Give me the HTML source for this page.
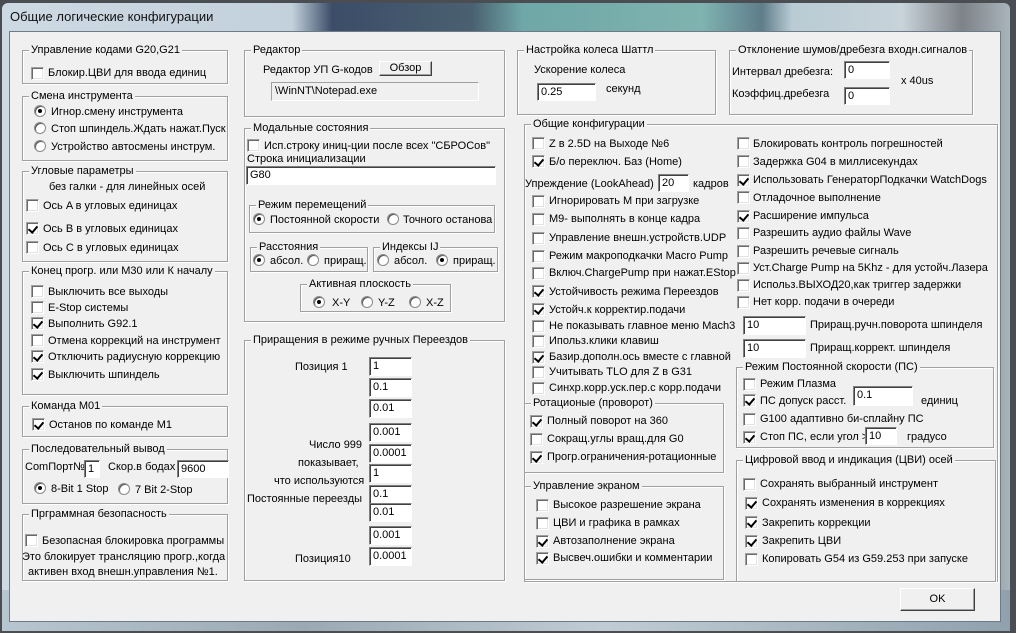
<!DOCTYPE html>
<html><head><meta charset="utf-8"><style>
*{margin:0;padding:0;box-sizing:border-box}
body{width:1016px;height:633px;overflow:hidden;background:#4a4e52;font-family:"Liberation Sans","DejaVu Sans",sans-serif;font-size:11px;color:#000;position:relative}
#frame{position:absolute;left:2px;top:3px;width:1008px;height:628px;border-radius:6px 6px 0 0;background:linear-gradient(90deg,#cdd9e3 0,#c3d1dc 290px,#3c4d68 330px,#4a6070 470px,#6ea7a6 520px,#7fb3b0 700px,#5f7d8a 760px,#b9cbd4 790px,#c8d3da 900px,#7d8388 960px,#a9b4bb 1008px)}
#frame2{position:absolute;left:2px;top:590px;width:1008px;height:41px;background:linear-gradient(90deg,#b7c6d1,#9aa9b4 30%,#c0ccd4 60%,#8fa1ad)}
#title{position:absolute;left:10px;top:9px;font-size:13px;color:#111}
#client{position:absolute;left:9px;top:31px;width:992px;height:591px;background:#f0f0f0;border:1px solid #6d7b88}
.a{position:absolute;white-space:nowrap;line-height:14px}
.g{position:absolute;border:1px solid #a0a0a0;box-shadow:1px 1px 0 #fff,inset 1px 1px 0 #fff}
.l{position:absolute;top:-8px;left:6px;background:#f0f0f0;padding:0 2px;line-height:14px;white-space:nowrap}
.c{position:absolute;width:13px;height:13px;background:#fff;border:1px solid;border-color:#a0a0a0 #fff #fff #a0a0a0;box-shadow:inset 1px 1px 0 #696969,inset -1px -1px 0 #e3e3e3}
.k::after{content:"";position:absolute;left:3px;top:1px;width:4px;height:7px;border:solid #000;border-width:0 2px 2px 0;transform:rotate(40deg)}
.r{position:absolute;width:12px;height:12px;border-radius:50%;background:#fff;border:1px solid #8a8a8a;box-shadow:inset 1px 1px 0 #555}
.s::after{content:"";position:absolute;left:3px;top:3px;width:4px;height:4px;border-radius:50%;background:#000}
.i{position:absolute;background:#fff;border:1px solid;border-color:#808080 #fff #fff #808080;box-shadow:inset 1px 1px 0 #404040;padding:1px 3px;line-height:14px;white-space:nowrap;overflow:hidden}
.b{position:absolute;background:#f0f0f0;border:1px solid;border-color:#fff #404040 #404040 #fff;box-shadow:inset -1px -1px 0 #a0a0a0;text-align:center;line-height:13px}
</style></head><body>
<div id="frame"></div><div id="frame2"></div>
<div id="title">Общие логические конфигурации</div>
<div id="client"></div>

<!-- Left column -->
<div class="g" style="left:22px;top:50px;width:206px;height:34px"><span class="l">Управление кодами G20,G21</span></div>
<div class="c" style="left:31px;top:67px"></div><div class="a" style="left:48px;top:66px">Блокир.ЦВИ для ввода единиц</div>

<div class="g" style="left:22px;top:96px;width:206px;height:65px"><span class="l">Смена инструмента</span></div>
<div class="r s" style="left:34px;top:105px"></div><div class="a" style="left:51px;top:105px">Игнор.смену инструмента</div>
<div class="r" style="left:34px;top:122px"></div><div class="a" style="left:51px;top:122px">Стоп шпиндель.Ждать нажат.Пуск</div>
<div class="r" style="left:34px;top:140px"></div><div class="a" style="left:51px;top:140px">Устройство автосмены инструм.</div>

<div class="g" style="left:22px;top:171px;width:206px;height:91px"><span class="l">Угловые параметры</span></div>
<div class="a" style="left:49px;top:180px">без галки - для линейных осей</div>
<div class="c" style="left:26px;top:199px"></div><div class="a" style="left:43px;top:199px">Ось A в угловых единицах</div>
<div class="c k" style="left:26px;top:222px"></div><div class="a" style="left:43px;top:222px">Ось B в угловых единицах</div>
<div class="c" style="left:26px;top:241px"></div><div class="a" style="left:43px;top:241px">Ось C в угловых единицах</div>

<div class="g" style="left:22px;top:271px;width:206px;height:124px"><span class="l">Конец прогр. или M30 или К началу</span></div>
<div class="c" style="left:31px;top:285px"></div><div class="a" style="left:48px;top:285px">Выключить все выходы</div>
<div class="c" style="left:31px;top:301px"></div><div class="a" style="left:48px;top:301px">E-Stop системы</div>
<div class="c k" style="left:31px;top:317px"></div><div class="a" style="left:48px;top:317px">Выполнить G92.1</div>
<div class="c" style="left:31px;top:334px"></div><div class="a" style="left:48px;top:334px">Отмена коррекций на инструмент</div>
<div class="c k" style="left:31px;top:350px"></div><div class="a" style="left:48px;top:350px">Отключить радиусную коррекцию</div>
<div class="c k" style="left:31px;top:368px"></div><div class="a" style="left:48px;top:368px">Выключить шпиндель</div>

<div class="g" style="left:22px;top:406px;width:206px;height:31px"><span class="l">Команда M01</span></div>
<div class="c k" style="left:32px;top:418px"></div><div class="a" style="left:49px;top:418px">Останов по команде M1</div>

<div class="g" style="left:22px;top:449px;width:206px;height:55px"><span class="l">Последовательный вывод</span></div>
<div class="a" style="left:25px;top:460px">ComПорт№</div>
<div class="i" style="left:84px;top:460px;width:16px;height:18px">1</div>
<div class="a" style="left:108px;top:460px">Скор.в бодах</div>
<div class="i" style="left:177px;top:460px;width:52px;height:18px">9600</div>
<div class="r s" style="left:34px;top:482px"></div><div class="a" style="left:51px;top:482px">8-Bit 1 Stop</div>
<div class="r" style="left:118px;top:483px"></div><div class="a" style="left:135px;top:483px">7 Bit 2-Stop</div>

<div class="g" style="left:22px;top:514px;width:206px;height:67px"><span class="l">Прграммная безопасность</span></div>
<div class="c" style="left:25px;top:534px"></div><div class="a" style="left:42px;top:534px">Безопасная блокировка программы</div>
<div class="a" style="left:22px;top:550px">Это блокирует трансляцию прогр.,когда</div>
<div class="a" style="left:28px;top:565px">активен вход внешн.управления №1.</div>

<!-- Middle column -->
<div class="g" style="left:244px;top:50px;width:261px;height:67px"><span class="l">Редактор</span></div>
<div class="a" style="left:263px;top:63px">Редактор УП G-кодов</div>
<div class="b" style="left:379px;top:61px;width:53px;height:15px">Обзор</div>
<div class="i" style="left:271px;top:82px;width:208px;height:19px;background:#f0f0f0;box-shadow:none;border-color:#a0a0a0 #fff #fff #a0a0a0">\WinNT\Notepad.exe</div>

<div class="g" style="left:244px;top:128px;width:261px;height:194px"><span class="l">Модальные состояния</span></div>
<div class="c" style="left:247px;top:139px"></div><div class="a" style="left:264px;top:139px">Исп.строку иниц-ции после всех "СБРОСов"</div>
<div class="a" style="left:247px;top:152px">Строка инициализации</div>
<div class="i" style="left:246px;top:166px;width:250px;height:19px">G80</div>
<div class="g" style="left:249px;top:205px;width:246px;height:28px"><span class="l">Режим перемещений</span></div>
<div class="r s" style="left:253px;top:213px"></div><div class="a" style="left:270px;top:213px">Постоянной скорости</div>
<div class="r" style="left:387px;top:213px"></div><div class="a" style="left:403px;top:213px">Точного останова</div>
<div class="g" style="left:250px;top:247px;width:118px;height:25px"><span class="l">Расстояния</span></div>
<div class="r s" style="left:253px;top:254px"></div><div class="a" style="left:270px;top:254px">абсол.</div>
<div class="r" style="left:307px;top:254px"></div><div class="a" style="left:324px;top:254px">приращ.</div>
<div class="g" style="left:373px;top:247px;width:125px;height:25px"><span class="l">Индексы IJ</span></div>
<div class="r" style="left:377px;top:254px"></div><div class="a" style="left:394px;top:254px">абсол.</div>
<div class="r s" style="left:436px;top:254px"></div><div class="a" style="left:453px;top:254px">приращ.</div>
<div class="g" style="left:300px;top:284px;width:151px;height:28px"><span class="l">Активная плоскость</span></div>
<div class="r s" style="left:313px;top:296px"></div><div class="a" style="left:332px;top:296px">X-Y</div>
<div class="r" style="left:361px;top:296px"></div><div class="a" style="left:378px;top:296px">Y-Z</div>
<div class="r" style="left:409px;top:296px"></div><div class="a" style="left:426px;top:296px">X-Z</div>

<div class="g" style="left:244px;top:340px;width:261px;height:241px"><span class="l">Приращения в режиме ручных Переездов</span></div>
<div class="a" style="left:295px;top:360px">Позиция 1</div>
<div class="a" style="left:309px;top:438px">Число 999</div>
<div class="a" style="left:298px;top:456px">показывает,</div>
<div class="a" style="left:274px;top:474px">что используются</div>
<div class="a" style="left:247px;top:492px">Постоянные переезды</div>
<div class="a" style="left:295px;top:552px">Позиция10</div>
<div class="i" style="left:369px;top:357px;width:43px;height:19px">1</div>
<div class="i" style="left:369px;top:378px;width:43px;height:19px">0.1</div>
<div class="i" style="left:369px;top:399px;width:43px;height:19px">0.01</div>
<div class="i" style="left:369px;top:423px;width:43px;height:19px">0.001</div>
<div class="i" style="left:369px;top:444px;width:43px;height:19px">0.0001</div>
<div class="i" style="left:369px;top:464px;width:43px;height:19px">1</div>
<div class="i" style="left:369px;top:485px;width:43px;height:19px">0.1</div>
<div class="i" style="left:369px;top:503px;width:43px;height:19px">0.01</div>
<div class="i" style="left:369px;top:526px;width:43px;height:19px">0.001</div>
<div class="i" style="left:369px;top:547px;width:43px;height:19px">0.0001</div>

<!-- Right part top -->
<div class="g" style="left:517px;top:50px;width:199px;height:65px"><span class="l">Настройка колеса Шаттл</span></div>
<div class="a" style="left:534px;top:63px">Ускорение колеса</div>
<div class="i" style="left:537px;top:83px;width:59px;height:18px">0.25</div>
<div class="a" style="left:606px;top:82px">секунд</div>
<div class="g" style="left:729px;top:50px;width:244px;height:65px"><span class="l">Отклонение шумов/дребезга входн.сигналов</span></div>
<div class="a" style="left:732px;top:65px">Интервал дребезга:</div>
<div class="i" style="left:844px;top:61px;width:46px;height:18px">0</div>
<div class="a" style="left:732px;top:87px">Коэффиц.дребезга</div>
<div class="i" style="left:844px;top:87px;width:46px;height:18px">0</div>
<div class="a" style="left:901px;top:74px">x 40us</div>

<!-- Общие конфигурации -->
<div class="g" style="left:524px;top:124px;width:474px;height:458px"><span class="l">Общие конфигурации</span></div>
<div class="c" style="left:532px;top:137px"></div><div class="a" style="left:549px;top:137px">Z в 2.5D на Выходе №6</div>
<div class="c k" style="left:532px;top:155px"></div><div class="a" style="left:549px;top:155px">Б/о переключ. Баз (Home)</div>
<div class="a" style="left:525px;top:177px">Упреждение (LookAhead)</div>
<div class="i" style="left:658px;top:174px;width:31px;height:18px">20</div>
<div class="a" style="left:693px;top:177px">кадров</div>
<div class="c" style="left:532px;top:195px"></div><div class="a" style="left:549px;top:194px">Игнорировать M при загрузке</div>
<div class="c" style="left:532px;top:213px"></div><div class="a" style="left:549px;top:212px">M9- выполнять в конце кадра</div>
<div class="c" style="left:532px;top:232px"></div><div class="a" style="left:549px;top:231px">Управление внешн.устройств.UDP</div>
<div class="c" style="left:532px;top:250px"></div><div class="a" style="left:549px;top:249px">Режим макроподкачки Macro Pump</div>
<div class="c" style="left:532px;top:267px"></div><div class="a" style="left:549px;top:266px">Включ.ChargePump при нажат.EStop</div>
<div class="c k" style="left:532px;top:285px"></div><div class="a" style="left:549px;top:285px">Устойчивость режима Переездов</div>
<div class="c k" style="left:532px;top:303px"></div><div class="a" style="left:549px;top:303px">Устойч.к корректир.подачи</div>
<div class="c" style="left:532px;top:320px"></div><div class="a" style="left:549px;top:319px">Не показывать главное меню Mach3</div>
<div class="c" style="left:532px;top:335px"></div><div class="a" style="left:549px;top:334px">Ипольз.клики клавиш</div>
<div class="c k" style="left:532px;top:351px"></div><div class="a" style="left:549px;top:350px">Базир.дополн.ось вместе с главной</div>
<div class="c" style="left:532px;top:366px"></div><div class="a" style="left:549px;top:365px">Учитывать TLO для Z в G31</div>
<div class="c" style="left:532px;top:382px"></div><div class="a" style="left:549px;top:381px">Синхр.корр.уск.пер.с корр.подачи</div>

<div class="g" style="left:524px;top:403px;width:200px;height:70px"><span class="l">Ротационые (проворот)</span></div>
<div class="c k" style="left:530px;top:415px"></div><div class="a" style="left:547px;top:414px">Полный поворот на 360</div>
<div class="c" style="left:530px;top:433px"></div><div class="a" style="left:547px;top:432px">Сокращ.углы вращ.для G0</div>
<div class="c k" style="left:530px;top:451px"></div><div class="a" style="left:547px;top:450px">Прогр.ограничения-ротационные</div>

<div class="g" style="left:524px;top:486px;width:200px;height:94px"><span class="l">Управление экраном</span></div>
<div class="c" style="left:536px;top:499px"></div><div class="a" style="left:553px;top:498px">Высокое разрешение экрана</div>
<div class="c" style="left:536px;top:517px"></div><div class="a" style="left:553px;top:516px">ЦВИ и графика в рамках</div>
<div class="c k" style="left:536px;top:535px"></div><div class="a" style="left:553px;top:534px">Автозаполнение экрана</div>
<div class="c k" style="left:536px;top:552px"></div><div class="a" style="left:553px;top:551px">Высвеч.ошибки и комментарии</div>

<div class="c" style="left:737px;top:137px"></div><div class="a" style="left:753px;top:137px">Блокировать контроль погрешностей</div>
<div class="c" style="left:737px;top:155px"></div><div class="a" style="left:753px;top:155px">Задержка G04 в миллисекундах</div>
<div class="c k" style="left:737px;top:174px"></div><div class="a" style="left:753px;top:173px">Использовать ГенераторПодкачки WatchDogs</div>
<div class="c" style="left:737px;top:191px"></div><div class="a" style="left:753px;top:191px">Отладочное выполнение</div>
<div class="c k" style="left:737px;top:210px"></div><div class="a" style="left:753px;top:209px">Расширение импульса</div>
<div class="c" style="left:737px;top:227px"></div><div class="a" style="left:753px;top:226px">Разрешить аудио файлы Wave</div>
<div class="c" style="left:737px;top:245px"></div><div class="a" style="left:753px;top:244px">Разрешить речевые сигналь</div>
<div class="c" style="left:737px;top:262px"></div><div class="a" style="left:753px;top:261px">Уст.Charge Pump на 5Khz - для устойч.Лазера</div>
<div class="c" style="left:737px;top:279px"></div><div class="a" style="left:753px;top:278px">Использ.ВЫХОД20,как триггер задержки</div>
<div class="c" style="left:737px;top:296px"></div><div class="a" style="left:753px;top:295px">Нет корр. подачи в очереди</div>
<div class="i" style="left:743px;top:316px;width:63px;height:19px">10</div>
<div class="a" style="left:810px;top:318px">Приращ.ручн.поворота шпинделя</div>
<div class="i" style="left:743px;top:339px;width:63px;height:19px">10</div>
<div class="a" style="left:810px;top:341px">Приращ.коррект. шпинделя</div>

<div class="g" style="left:736px;top:367px;width:258px;height:81px"><span class="l">Режим Постоянной скорости (ПС)</span></div>
<div class="c" style="left:743px;top:378px"></div><div class="a" style="left:760px;top:377px">Режим Плазма</div>
<div class="c k" style="left:743px;top:394px"></div><div class="a" style="left:760px;top:394px">ПС допуск расст.</div>
<div class="i" style="left:853px;top:386px;width:60px;height:20px">0.1</div>
<div class="a" style="left:921px;top:394px">единиц</div>
<div class="c" style="left:743px;top:413px"></div><div class="a" style="left:760px;top:412px">G100 адаптивно би-сплайну ПС</div>
<div class="c k" style="left:743px;top:431px"></div><div class="a" style="left:760px;top:430px">Стоп ПС, если угол &gt;</div>
<div class="i" style="left:865px;top:427px;width:32px;height:18px">10</div>
<div class="a" style="left:907px;top:430px">градусо</div>

<div class="g" style="left:736px;top:460px;width:260px;height:122px"><span class="l">Цифровой ввод и индикация (ЦВИ) осей</span></div>
<div class="c" style="left:743px;top:478px"></div><div class="a" style="left:760px;top:477px">Сохранять выбранный инструмент</div>
<div class="c k" style="left:745px;top:497px"></div><div class="a" style="left:762px;top:496px">Сохранять изменения в коррекциях</div>
<div class="c k" style="left:745px;top:516px"></div><div class="a" style="left:762px;top:516px">Закрепить коррекции</div>
<div class="c k" style="left:745px;top:535px"></div><div class="a" style="left:762px;top:534px">Закрепить ЦВИ</div>
<div class="c" style="left:745px;top:553px"></div><div class="a" style="left:762px;top:552px">Копировать G54 из G59.253 при запуске</div>

<div class="b" style="left:900px;top:588px;width:75px;height:23px;line-height:20px">OK</div>
</body></html>
